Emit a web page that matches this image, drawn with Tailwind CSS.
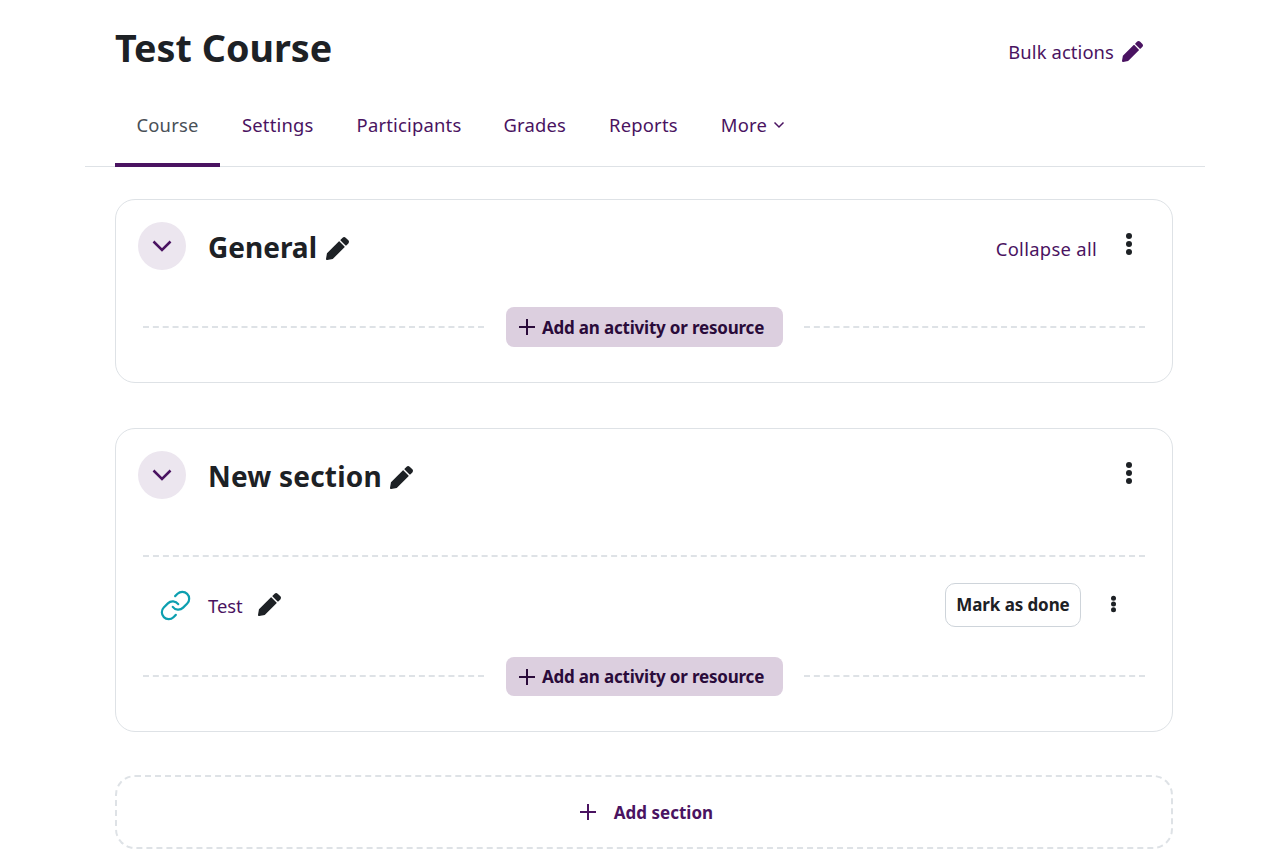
<!DOCTYPE html>
<html lang="en">
<head>
    <meta charset="UTF-8">
    <script src="https://cdn.jsdelivr.net/npm/@tailwindcss/browser@4"></script>
    <title>Test Course</title>
</head>
<body class="bg-white h-[866px] overflow-hidden font-['Noto_Sans',sans-serif]">
<div class="w-[1120px] ml-[85px]">

    <!-- Title row -->
    <div class="flex items-center justify-between h-[97px] pl-[30px] pr-[62px]">
        <h1 class="text-[37.7px] leading-[44px] font-bold text-[#1d2125] -mt-[2px]">Test Course</h1>
        <div class="flex items-center gap-[8px] text-[18.4px] text-[#4a1361] tracking-[0.1px] mt-[7px]">
            Bulk actions
            <svg viewBox="0 0 512 512" class="w-[21px] h-[21px] fill-[#4a1361]"><path d="M497.9 142.1l-46.1 46.1c-4.7 4.7-12.3 4.7-17 0l-111-111c-4.7-4.7-4.7-12.3 0-17l46.1-46.1c18.7-18.7 49.1-18.7 67.9 0l60.1 60.1c18.8 18.7 18.8 49.1 0 67.9zM284.2 99.8L21.6 362.4.4 483.9c-2.9 16.4 11.4 30.6 27.8 27.8l121.5-21.3 262.6-262.6c4.7-4.7 4.7-12.3 0-17l-111-111c-4.8-4.7-12.4-4.7-17.1 0z"/></svg>
        </div>
    </div>

    <!-- Tabs -->
    <nav class="flex h-[70px] pl-[30px] border-b border-[#dee2e6] text-[18.4px] tracking-[0.2px] text-[#4a1361]">
        <a class="w-[105px] flex justify-center pt-[14px] border-b-[4px] border-[#4a1361] text-[#495057] h-[70px]">Course</a>
        <a class="ml-[22px] pt-[14px]">Settings</a>
        <a class="ml-[43px] pt-[14px]">Participants</a>
        <a class="ml-[42px] pt-[14px]">Grades</a>
        <a class="ml-[43px] pt-[14px]">Reports</a>
        <a class="ml-[43px] pt-[14px] flex items-start gap-[6px]">More
            <svg viewBox="0 0 12 12" class="w-[12px] h-[12px] mt-[8px] fill-none stroke-[#4a1361] stroke-[1.5]"><path d="M1.5 3.5 6 8l4.5-4.5"/></svg>
        </a>
    </nav>

    <div class="ml-[30px] w-[1058px] mt-[32px]">

        <!-- General section -->
        <section class="h-[184px] border border-[#dee2e6] rounded-[20px] pt-[22px] px-[22px]">
            <div class="flex items-center h-[48px]">
                <div class="w-[48px] h-[48px] rounded-full bg-[#ece6ef] flex items-center justify-center">
                    <svg viewBox="0 0 20 12" class="w-[20px] h-[12px] fill-none stroke-[#4a1361] stroke-[2.5]"><path d="M1.5 1.5 10 10l8.5-8.5"/></svg>
                </div>
                <h2 class="ml-[22px] text-[28px] font-bold text-[#1d2125] mt-[2px]">General</h2>
                <svg viewBox="0 0 512 512" class="ml-[9px] mt-[4px] w-[23px] h-[23px] fill-[#1d2125]"><path d="M497.9 142.1l-46.1 46.1c-4.7 4.7-12.3 4.7-17 0l-111-111c-4.7-4.7-4.7-12.3 0-17l46.1-46.1c18.7-18.7 49.1-18.7 67.9 0l60.1 60.1c18.8 18.7 18.8 49.1 0 67.9zM284.2 99.8L21.6 362.4.4 483.9c-2.9 16.4 11.4 30.6 27.8 27.8l121.5-21.3 262.6-262.6c4.7-4.7 4.7-12.3 0-17l-111-111c-4.8-4.7-12.4-4.7-17.1 0z"/></svg>
                <span class="ml-auto text-[18.4px] text-[#4a1361] tracking-[0.3px] mt-[5px]">Collapse all</span>
                <svg viewBox="0 0 6 24" class="ml-[29px] mr-[18px] -mt-[4px] w-[6px] h-[24px] fill-[#1d2125]"><circle cx="3" cy="4" r="3"/><circle cx="3" cy="12" r="3"/><circle cx="3" cy="20" r="3"/></svg>
            </div>
            <div class="flex items-center mt-[37px] ml-[5px] mr-[5px]">
                <div class="w-[341px] border-t-2 border-dashed border-[#dee2e6]"></div>
                <button class="ml-[22px] w-[277px] h-[40px] rounded-[8px] bg-[#dccfdf] flex items-center pl-[13px] gap-[7px] text-[17px] font-bold text-[#2a0b3a] tracking-[-0.2px]">
                    <svg viewBox="0 0 16 16" class="w-[16px] h-[16px] fill-none stroke-[#2a0b3a] stroke-[2]"><path d="M8 0v16M0 8h16"/></svg>
                    <span class="mt-[1px]">Add an activity or resource</span>
                </button>
                <div class="ml-[21px] flex-1 border-t-2 border-dashed border-[#dee2e6]"></div>
            </div>
        </section>

        <!-- New section -->
        <section class="mt-[45px] h-[304px] border border-[#dee2e6] rounded-[20px] pt-[22px] px-[22px]">
            <div class="flex items-center h-[48px]">
                <div class="w-[48px] h-[48px] rounded-full bg-[#ece6ef] flex items-center justify-center">
                    <svg viewBox="0 0 20 12" class="w-[20px] h-[12px] fill-none stroke-[#4a1361] stroke-[2.5]"><path d="M1.5 1.5 10 10l8.5-8.5"/></svg>
                </div>
                <h2 class="ml-[22px] text-[28px] font-bold text-[#1d2125] tracking-[0.2px] mt-[2px]">New section</h2>
                <svg viewBox="0 0 512 512" class="ml-[8px] mt-[4px] w-[23px] h-[23px] fill-[#1d2125]"><path d="M497.9 142.1l-46.1 46.1c-4.7 4.7-12.3 4.7-17 0l-111-111c-4.7-4.7-4.7-12.3 0-17l46.1-46.1c18.7-18.7 49.1-18.7 67.9 0l60.1 60.1c18.8 18.7 18.8 49.1 0 67.9zM284.2 99.8L21.6 362.4.4 483.9c-2.9 16.4 11.4 30.6 27.8 27.8l121.5-21.3 262.6-262.6c4.7-4.7 4.7-12.3 0-17l-111-111c-4.8-4.7-12.4-4.7-17.1 0z"/></svg>
                <svg viewBox="0 0 6 24" class="ml-auto mr-[18px] -mt-[4px] w-[6px] h-[24px] fill-[#1d2125]"><circle cx="3" cy="4" r="3"/><circle cx="3" cy="12" r="3"/><circle cx="3" cy="20" r="3"/></svg>
            </div>
            <div class="mt-[56px] mx-[5px] border-t-2 border-dashed border-[#dee2e6]"></div>

            <!-- Activity row -->
            <div class="flex items-center h-[44px] mt-[26px]">
                <svg viewBox="0 0 24 24" class="ml-[21px] w-[33px] h-[33px] fill-none stroke-[#0d9fb0] stroke-[1.6]" stroke-linecap="round" stroke-linejoin="round"><path d="M10 13a5 5 0 0 0 7.54.54l3-3a5 5 0 0 0-7.07-7.07l-1.72 1.71"/><path d="M14 11a5 5 0 0 0-7.54-.54l-3 3a5 5 0 0 0 7.07 7.07l1.71-1.71"/></svg>
                <span class="ml-[16px] text-[18.4px] text-[#4a1361] mt-[1px]">Test</span>
                <svg viewBox="0 0 512 512" class="ml-[15px] -mt-[1px] w-[23px] h-[23px] fill-[#1d2125]"><path d="M497.9 142.1l-46.1 46.1c-4.7 4.7-12.3 4.7-17 0l-111-111c-4.7-4.7-4.7-12.3 0-17l46.1-46.1c18.7-18.7 49.1-18.7 67.9 0l60.1 60.1c18.8 18.7 18.8 49.1 0 67.9zM284.2 99.8L21.6 362.4.4 483.9c-2.9 16.4 11.4 30.6 27.8 27.8l121.5-21.3 262.6-262.6c4.7-4.7 4.7-12.3 0-17l-111-111c-4.8-4.7-12.4-4.7-17.1 0z"/></svg>
                <button class="ml-auto w-[136px] h-[44px] border border-[#ced4da] rounded-[10px] text-[17px] font-bold text-[#1d2125] tracking-[-0.1px]">Mark as done</button>
                <svg viewBox="0 0 6 20" class="ml-[30px] mr-[34px] -mt-[2px] w-[5px] h-[18px] fill-[#1d2125]"><circle cx="3" cy="3" r="3"/><circle cx="3" cy="10" r="3"/><circle cx="3" cy="17" r="3"/></svg>
            </div>

            <div class="flex items-center mt-[30px] ml-[5px] mr-[5px]">
                <div class="w-[341px] -mt-[2px] border-t-2 border-dashed border-[#dee2e6]"></div>
                <button class="ml-[22px] w-[277px] h-[39px] rounded-[8px] bg-[#dccfdf] flex items-center pl-[13px] gap-[7px] text-[17px] font-bold text-[#2a0b3a] tracking-[-0.2px]">
                    <svg viewBox="0 0 16 16" class="w-[16px] h-[16px] fill-none stroke-[#2a0b3a] stroke-[2]"><path d="M8 0v16M0 8h16"/></svg>
                    <span>Add an activity or resource</span>
                </button>
                <div class="ml-[21px] -mt-[2px] flex-1 border-t-2 border-dashed border-[#dee2e6]"></div>
            </div>
        </section>

        <!-- Add section -->
        <div class="mt-[43px] h-[74px] border-2 border-dashed border-[#dee2e6] rounded-[20px] flex items-center justify-center pl-[5px] gap-[18px] text-[17px] font-bold text-[#4a1361]">
            <svg viewBox="0 0 16 16" class="w-[16px] h-[16px] fill-none stroke-[#4a1361] stroke-[2]"><path d="M8 0v16M0 8h16"/></svg>
            <span class="mt-[1px]">Add section</span>
        </div>
    </div>
</div>
</body>
</html>
